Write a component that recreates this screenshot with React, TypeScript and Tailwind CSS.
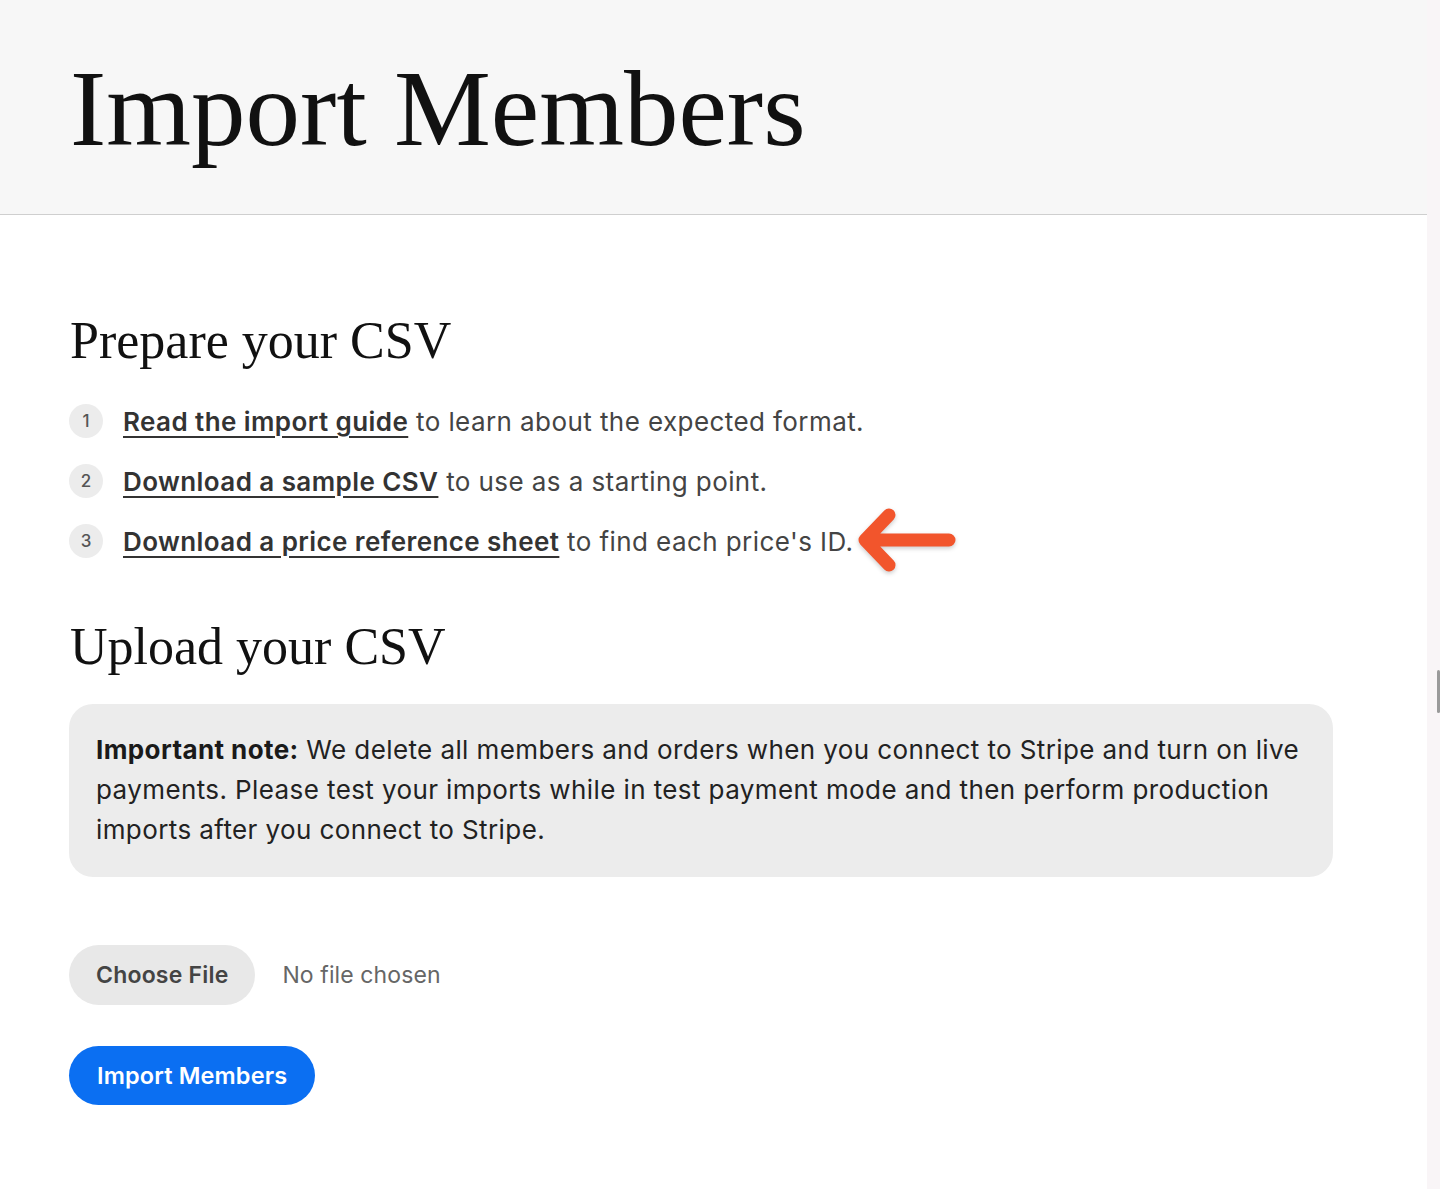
import React from "react";

const sans = "font-['Inter','Noto_Sans',sans-serif]";
const serif = "font-['Liberation_Serif','DejaVu_Serif',serif]";

function Step({ n, link, rest, arrow }: { n: number; link: string; rest: string; arrow?: boolean }) {
  return (
    <li className="flex items-center h-[60px]">
      <span className="flex items-center justify-center w-[34px] h-[34px] pt-[2px] rounded-full bg-[#ececec] text-[#555] text-[17px] font-medium">{n}</span>
      <span className="ml-[20px] text-[26px] text-[#444] tracking-[0.42px]">
        <a href="#" className="font-semibold text-[#333] underline underline-offset-[5px] decoration-[2px]">{link}</a> {rest}
      </span>
      {arrow && (
        <svg width="100" height="72" viewBox="0 0 100 72" className="ml-[4px] drop-shadow-[0_2px_2px_rgba(0,0,0,0.2)]">
          <path d="M8 35 H92 M32 10 L8 35 L32 60" stroke="#f2552c" strokeWidth="13" strokeLinecap="round" strokeLinejoin="round" fill="none" />
        </svg>
      )}
    </li>
  );
}

export default function App() {
  return (
    <div className={`flex w-[1440px] min-h-[1189px] bg-white ${sans}`}>
      <div className="w-[1427px]">
        <header className="h-[215px] bg-[#f7f7f7] border-b border-[#cfcfcf] pl-[70px] pt-[44px]">
          <h1 className={`${serif} text-[109px] leading-[130px] text-[#111]`}>Import Members</h1>
        </header>
        <main className="pl-[69px] pt-[91px] w-[1333px]">
          <h2 className={`${serif} text-[52px] leading-[70px] text-[#111] pl-[1px]`}>Prepare your CSV</h2>
          <ol className="mt-[15px]">
            <Step n={1} link="Read the import guide" rest="to learn about the expected format." />
            <Step n={2} link="Download a sample CSV" rest="to use as a starting point." />
            <Step n={3} link="Download a price reference sheet" rest="to find each price's ID." arrow />
          </ol>
          <h2 className={`${serif} text-[52px] leading-[70px] text-[#111] pl-[1px] mt-[41px]`}>Upload your CSV</h2>
          <div className="mt-[22px] rounded-[24px] bg-[#ececec] px-[27px] pt-[26px] pb-[27px] text-[26px] leading-[40px] text-[#222] tracking-[0.4px]">
            <strong className="font-bold text-[#1a1a1a]">Important note:</strong> We delete all members and orders when you connect to Stripe and turn on live payments. Please test your imports while in test payment mode and then perform production imports after you connect to Stripe.
          </div>
          <div className="mt-[68px] flex items-center">
            <button className="h-[60px] px-[27px] rounded-full bg-[#e8e8e8] text-[23px] tracking-[0.2px] font-semibold text-[#444]">Choose File</button>
            <span className="ml-[27px] text-[23px] tracking-[0.1px] text-[#666]">No file chosen</span>
          </div>
          <button className="mt-[41px] h-[59px] px-[28px] rounded-full bg-[#0b6ff2] text-[23.5px] tracking-[0.15px] font-semibold text-white">Import Members</button>
        </main>
      </div>
      <div className="w-[13px] bg-[#f9f5f7] relative">
        <div className="absolute right-0 top-[670px] w-[3px] h-[43px] bg-[#9a9a9a] rounded-sm" />
      </div>
    </div>
  );
}
